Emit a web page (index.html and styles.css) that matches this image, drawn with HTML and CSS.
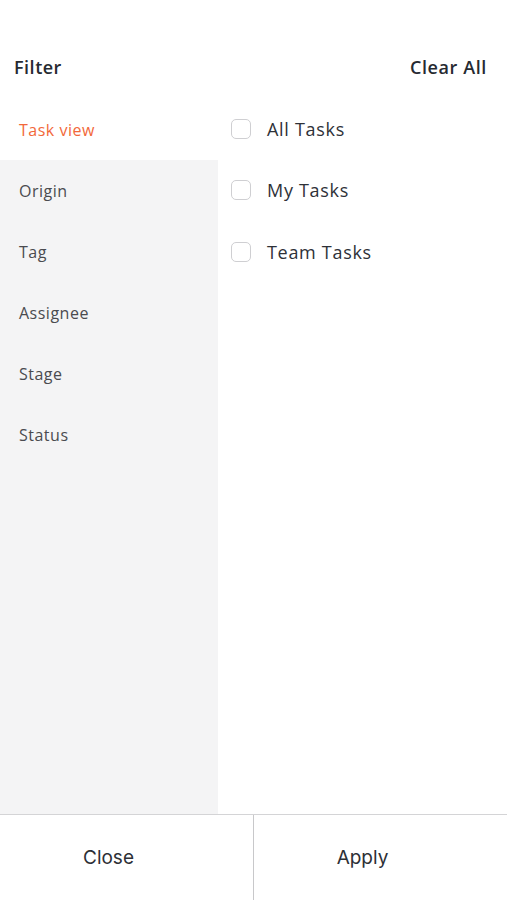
FILE: index.html
```html
<!DOCTYPE html>
<html lang="en">
<head>
<meta charset="utf-8">
<title>Filter</title>
<link rel="stylesheet" href="styles.css">
</head>
<body>
<div class="screen">
  <header class="header">
    <span class="title">Filter</span>
    <span class="clear">Clear All</span>
  </header>
  <main class="main">
    <nav class="sidebar">
      <div class="side-item active">Task view</div>
      <div class="side-item">Origin</div>
      <div class="side-item">Tag</div>
      <div class="side-item">Assignee</div>
      <div class="side-item">Stage</div>
      <div class="side-item">Status</div>
    </nav>
    <section class="options">
      <label class="option"><span class="box"></span><span class="label">All Tasks</span></label>
      <label class="option"><span class="box"></span><span class="label">My Tasks</span></label>
      <label class="option"><span class="box"></span><span class="label">Team Tasks</span></label>
    </section>
  </main>
  <footer class="footer">
    <div class="btn">Close</div>
    <div class="btn btn-right">Apply</div>
  </footer>
</div>
</body>
</html>
```
FILE: styles.css
```css
* { box-sizing: border-box; }
html, body { margin: 0; padding: 0; background: #fff; }
body { font-family: "Open Sans", "Noto Sans", sans-serif; color: #2b2f36; }
.screen { width: 507px; height: 900px; display: flex; flex-direction: column; }
.header {
  height: 99px;
  display: flex;
  justify-content: space-between;
  align-items: flex-end;
  padding: 0 20px 21px 14px;
}
.title, .clear { font-size: 18px; font-weight: 600; line-height: 22px; color: #262a31; letter-spacing: 0.6px; }
.title { letter-spacing: 0.5px; }
.main { flex: 1; display: flex; }
.sidebar { width: 218px; background: #f4f4f5; display: flex; flex-direction: column; }
.side-item {
  height: 61px;
  display: flex;
  align-items: center;
  padding-left: 19px;
  font-size: 16px;
  letter-spacing: 0.5px;
  color: #4a4b4f;
}
.side-item.active { background: #fff; color: #f2683a; }
.options { flex: 1; display: flex; flex-direction: column; padding-left: 13px; margin-top: -1px; }
.option { height: 61.5px; display: flex; align-items: center; gap: 16px; }
.box {
  width: 20px; height: 20px;
  border: 1.5px solid #cfcfd2;
  border-radius: 5px;
  background: #fff;
}
.label { font-size: 18px; letter-spacing: 0.7px; color: #2e3138; }
.footer {
  height: 86px;
  border-top: 1px solid #d4d4d6;
  display: flex;
}
.btn {
  flex: 1;
  display: flex;
  align-items: center;
  justify-content: center;
  padding-right: 36px;
  font-family: "Inter", "Roboto", sans-serif;
  font-size: 19px;
  color: #2d3036;
}
.btn-right { border-left: 1px solid #c8c8ca; }
```
